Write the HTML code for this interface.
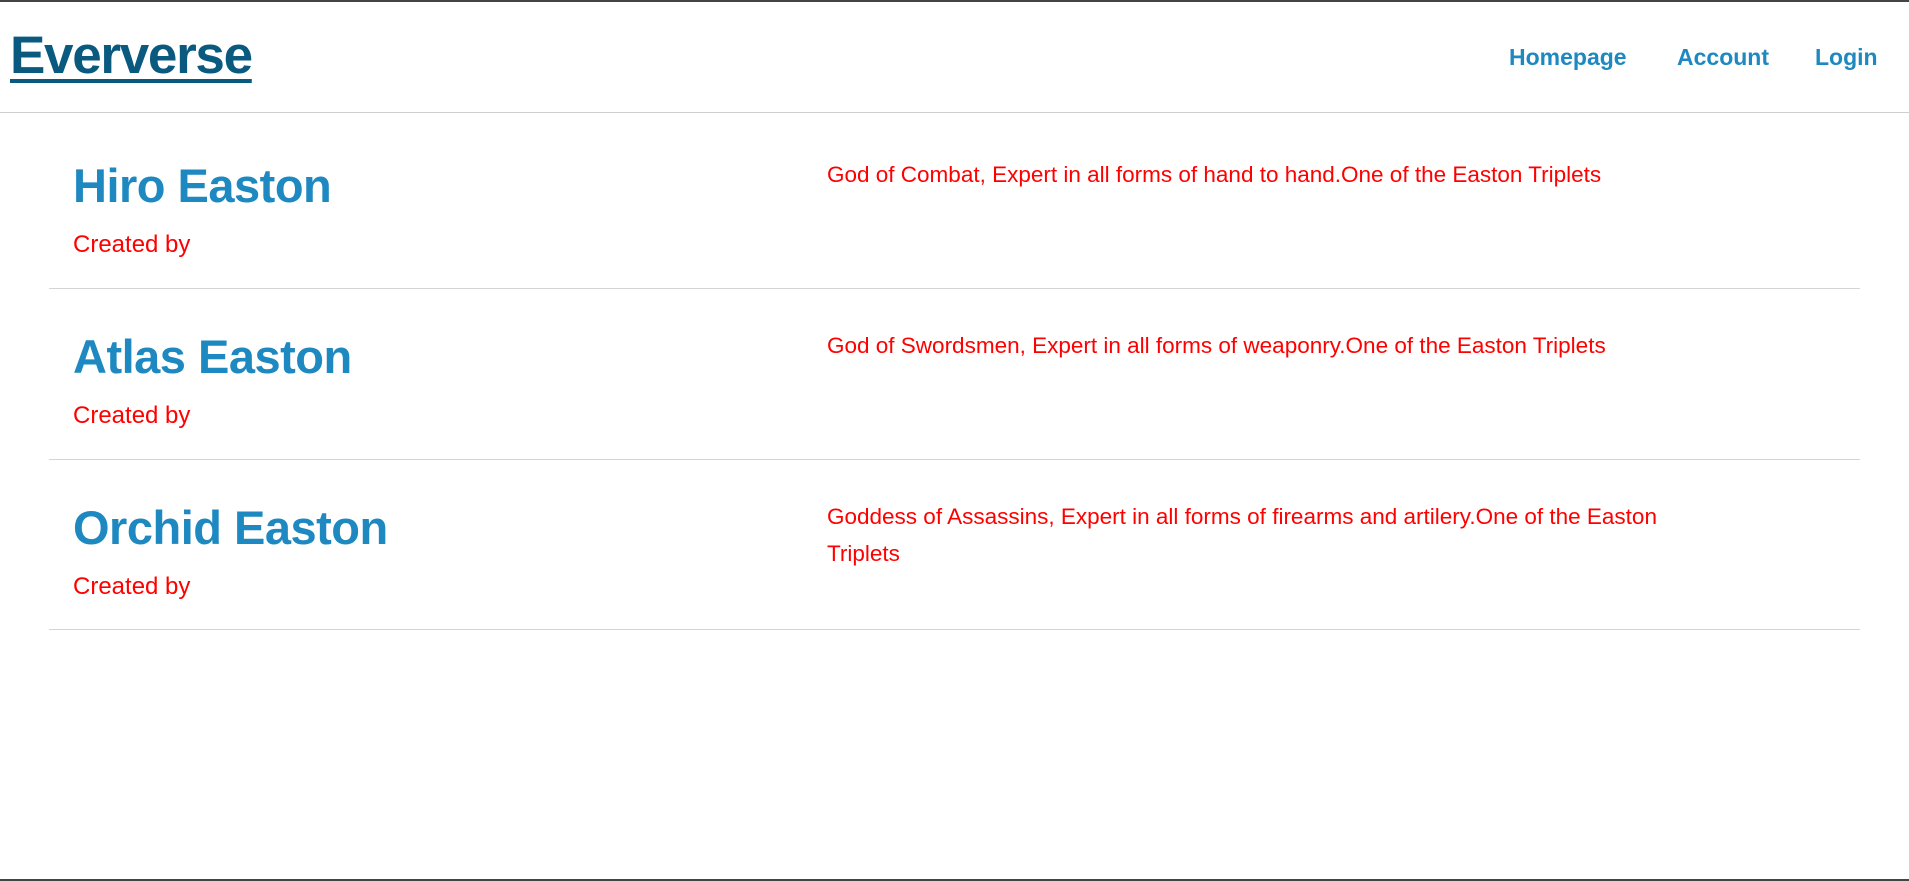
<!DOCTYPE html>
<html><head><meta charset="utf-8"><style>
html,body{margin:0;padding:0;width:1909px;height:881px;overflow:hidden;background:#fff;font-family:"Liberation Sans",sans-serif;}
body{border-top:2px solid #444;border-bottom:2px solid #444;box-sizing:border-box;position:relative}
.hdr{position:absolute;top:0;left:0;right:0;height:110px;border-bottom:1px solid #cfcfcf}
.logo{position:absolute;left:10px;top:23px;font-size:53px;font-weight:bold;color:#0a5a80;text-decoration:underline;text-decoration-thickness:4px;text-underline-offset:6px;letter-spacing:-1.3px}
.nav a{position:absolute;top:42px;font-size:23px;font-weight:bold;color:#1e88c0;text-decoration:none}
.row{position:absolute;left:49px;width:1811px;border-bottom:1px solid #d4d4d4}
.name{position:absolute;left:24px;font-size:47px;font-weight:bold;color:#1e88c0;letter-spacing:-0.5px}
.cb{position:absolute;left:24px;font-size:24px;color:#f00}
.desc{position:absolute;left:778px;width:1000px;font-size:22.5px;line-height:37px;color:#f00}
</style></head><body>
<div class="hdr">
<div class="logo">Eververse</div>
<div class="nav"><a style="left:1509px">Homepage</a><a style="left:1677px">Account</a><a style="left:1815px">Login</a></div>
</div>
<div class="row" style="top:112px;height:174px">
<div class="name" style="top:44px">Hiro Easton</div>
<div class="cb" style="top:117px">Created by</div>
<div class="desc" style="top:42px">God of Combat, Expert in all forms of hand to hand.One of the Easton Triplets</div>
</div>
<div class="row" style="top:287px;height:170px">
<div class="name" style="top:40px">Atlas Easton</div>
<div class="cb" style="top:113px">Created by</div>
<div class="desc" style="top:38px">God of Swordsmen, Expert in all forms of weaponry.One of the Easton Triplets</div>
</div>
<div class="row" style="top:458px;height:169px">
<div class="name" style="top:40px">Orchid Easton</div>
<div class="cb" style="top:113px">Created by</div>
<div class="desc" style="top:38px">Goddess of Assassins, Expert in all forms of firearms and artilery.One of the Easton<br>Triplets</div>
</div>
</body></html>
